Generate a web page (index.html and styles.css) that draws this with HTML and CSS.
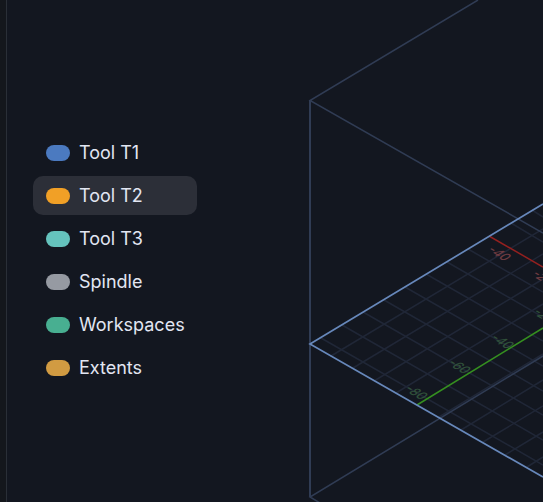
FILE: index.html
```
<!DOCTYPE html>
<html lang="en">
<head>
  <meta charset="UTF-8">
  <meta name="viewport" content="width=device-width, initial-scale=1">
  <title>Toolpath Viewer</title>
  <link rel="stylesheet" href="styles.css">
</head>
<body>
  <main class="viewer">
    <svg class="scene" viewBox="0 0 543 502" preserveAspectRatio="xMinYMid slice" role="img" aria-label="Machine work area">
      <!-- grid, lines along Y -->
      <g class="grid">
        <path d="M331 356L543 229"/>
        <path d="M353 368L543 254"/>
        <path d="M374 381L543 279"/>
        <path d="M396 393L543 304"/>
        <path d="M439 417L543 354"/>
        <path d="M461 430L543 380"/>
        <path d="M483 442L543 406"/>
        <path d="M505 455L543 432"/>
        <path d="M527 467L543 457"/>
      </g>
      <!-- grid, lines along X -->
      <g class="grid">
        <path d="M321 338L543 465"/>
        <path d="M342 325L543 440"/>
        <path d="M363 312L543 415"/>
        <path d="M384 300L543 391"/>
        <path d="M405 287L543 366"/>
        <path d="M426 274L543 341"/>
        <path d="M447 262L543 317"/>
        <path d="M468 249L543 292"/>
        <path d="M511 223L543 242"/>
        <path d="M532 210L543 217"/>
      </g>
      <!-- machine envelope -->
      <path class="box" d="M478 0L310 100.500L543 233"/>
      <path class="box box-side" d="M310 100V497"/>
      <path class="box" d="M543 356L310 497L320 503"/>
      <!-- axes -->
      <path class="axis-x" d="M489 236L543 267"/>
      <path class="axis-y" d="M417 405L543 328"/>
      <path class="plane" d="M543 204L310 344L543 477"/>
      <g class="mark mark-x">
        <text transform="translate(495 256) rotate(30) skewX(-30)">-40</text>
        <text transform="translate(539 280) rotate(30) skewX(-30)">-20</text>
      </g>
      <g class="mark mark-y">
        <text transform="translate(412 395) rotate(30) skewX(-30)">-80</text>
        <text transform="translate(455 369) rotate(30) skewX(-30)">-60</text>
        <text transform="translate(498 344) rotate(30) skewX(-30)">-40</text>
        <text transform="translate(540 318) rotate(30) skewX(-30)">-20</text>
      </g>
    </svg>

    <nav class="legend" aria-label="Layers">
      <button type="button" class="legend-item"><span class="swatch swatch-t1"></span>Tool T1</button>
      <button type="button" class="legend-item active" aria-pressed="true"><span class="swatch swatch-t2"></span>Tool T2</button>
      <button type="button" class="legend-item"><span class="swatch swatch-t3"></span>Tool T3</button>
      <button type="button" class="legend-item"><span class="swatch swatch-spindle"></span>Spindle</button>
      <button type="button" class="legend-item"><span class="swatch swatch-workspaces"></span>Workspaces</button>
      <button type="button" class="legend-item"><span class="swatch swatch-extents"></span>Extents</button>
    </nav>
  </main>
</body>
</html>
```
FILE: styles.css
```
body {
  margin: 0;
  padding-left: 6px;
  background: #14171c;
  color: #e2e6f2;
  font-family: Inter, "Liberation Sans", sans-serif;
}

.viewer {
  position: relative;
  display: flex;
  align-items: center;
  box-sizing: border-box;
  min-height: 100vh;
  padding: 18px 26px 0;
  border-left: 1px solid #2a2f37;
  background: #131720;
  overflow: hidden;
}

/* 3D view fills the window behind the legend */
.scene {
  position: absolute;
  top: 0;
  left: -7px;
  width: 100vw;
  height: 100%;
  fill: none;
}

.grid {
  stroke: #202737;
  stroke-width: 1.5;
}

.box {
  stroke: #303c54;
  stroke-width: 1.5;
}

.box-side {
  stroke-width: 2;
}

.plane {
  stroke: #6788bb;
  stroke-width: 1.7;
}

.axis-x {
  stroke: #94201f;
  stroke-width: 1.5;
}

.axis-y {
  stroke: #358f20;
  stroke-width: 1.5;
}

.mark {
  font-size: 12px;
  font-weight: 500;
  text-anchor: middle;
}

.mark-x {
  fill: #6e3b41;
}

.mark-y {
  fill: #30503a;
}

.legend {
  position: relative;
  display: flex;
  flex-direction: column;
  gap: 4px;
}

.legend-item {
  display: flex;
  align-items: center;
  gap: 9px;
  min-width: 164px;
  padding: 8px 12px 8px 13px;
  border: none;
  border-radius: 10px;
  background: none;
  color: inherit;
  font: inherit;
  font-size: 18px;
  line-height: 23px;
  text-align: left;
  cursor: pointer;
}

.legend-item:hover,
.legend-item.active {
  background: #2c2f38;
}

.swatch {
  width: 24px;
  height: 16px;
  border-radius: 8px;
}

.swatch-t1 {
  background: #4b7ac0;
}

.swatch-t2 {
  background: #f1a026;
}

.swatch-t3 {
  background: #65c3bd;
}

.swatch-spindle {
  background: #969aa2;
}

.swatch-workspaces {
  background: #48af91;
}

.swatch-extents {
  background: #d19b42;
}
```
